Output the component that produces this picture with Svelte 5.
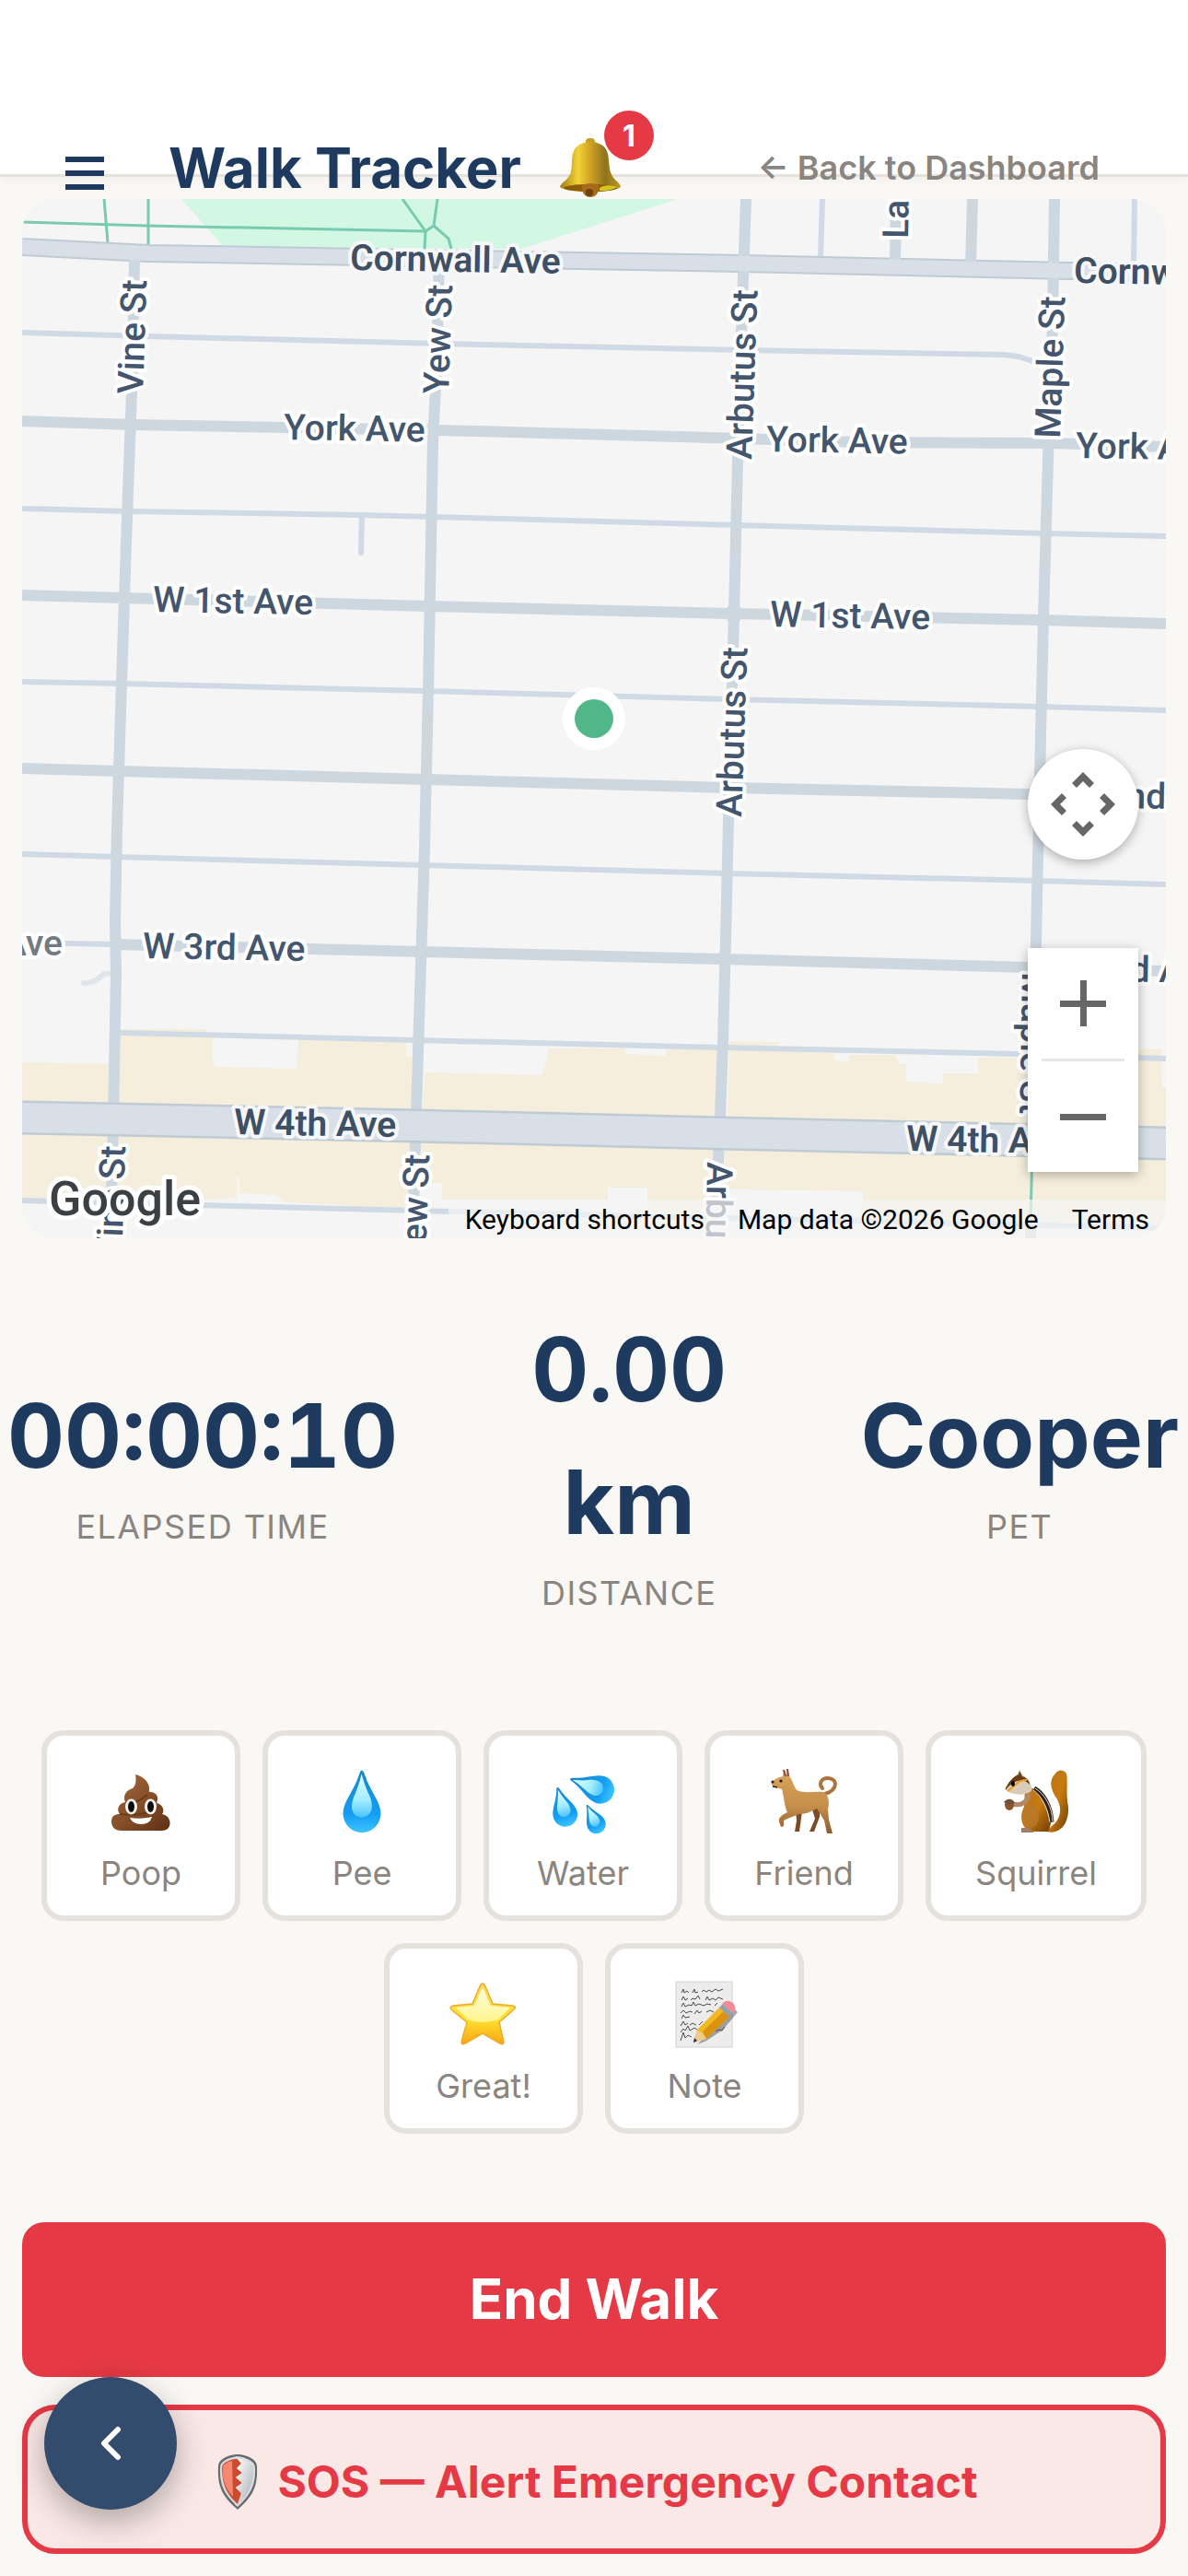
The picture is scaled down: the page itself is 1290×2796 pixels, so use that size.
<script lang="ts">
  type Kind = 'poop' | 'pee' | 'water' | 'friend' | 'squirrel' | 'great' | 'note'

  let elapsed = $state('00:00:10')
  let distance = $state('0.00 km')
  let petName = $state('Cooper')
  let unread = $state(1)

  const events: { kind: Kind; label: string }[] = [
    { kind: 'poop', label: 'Poop' },
    { kind: 'pee', label: 'Pee' },
    { kind: 'water', label: 'Water' },
    { kind: 'friend', label: 'Friend' },
    { kind: 'squirrel', label: 'Squirrel' },
    { kind: 'great', label: 'Great!' },
    { kind: 'note', label: 'Note' }
  ]

  const shops = [
    '24,1153 118,1155 118,1200 24,1198',
    '131,1117 225,1117 225,1123 231,1124 231,1155 236,1158 322,1160 324,1129 441,1131 441,1147 447,1147 447,1210 128,1202',
    '461,1164 507,1165 589,1167 596,1138 679,1138 679,1144 723,1146 723,1139 780,1139 780,1220 459,1210',
    '792,1130 846,1131 846,1137 906,1141 906,1151 922,1152 922,1145 973,1145 976,1155 984,1155 984,1174 1024,1176 1024,1165 1062,1165 1062,1148 1236,1148 1236,1139 1261,1139 1262,1180 1266,1180 1266,1228 790,1216',
    '24,1228 118,1230 118,1306 24,1306',
    '128,1230 447,1238 447,1316 390,1316 390,1309 309,1305 300,1297 260,1295 260,1278 257,1278 257,1300 226,1302 128,1302',
    '457,1238 776,1246 776,1318 703,1316 703,1289 660,1289 660,1302 480,1302 480,1284 457,1283',
    '787,1246 1266,1256 1266,1336 937,1330 937,1293 868,1292 787,1291'
  ]

  const paths = [
    '24,241 160,245 463,251',
    '113,216 117,263',
    '161,216 161,266',
    '437,216 462,251 461,270',
    '475,216 471,245 462,251',
    '471,245 487,259 490,270',
    '1121,1250 1119,1322'
  ]

  const lanes = [
    '24,361 161,365 477,373 806,380 1090,385 1106,387 1127,394',
    '24,552 139,555 392,559 469,561 800,570 1135,579 1266,582',
    '393,561 392,600',
    '24,740 133,742 463,750 793,759 1131,767 1266,771',
    '24,927 126,930 459,939 789,948 1127,956 1266,960',
    '24,1023 122,1025',
    '131,1121 452,1129 785,1137 1104,1144 1266,1149',
    '24,1303 452,1314 783,1322 1266,1333',
    '893,216 891,280',
    '1232,216 1231,288'
  ]

  const streets = [
    '24,457 144,461 477,467 806,476 930,480 1143,481 1266,485',
    '24,646 135,649 467,658 797,666 1133,673 1266,677',
    '24,834 130,837 462,846 791,855 1117,862 1266,866',
    '124,1025 459,1033 787,1041 1117,1050 1266,1054',
    '146,276 144,400 141,480 137,590 132,740 127,900 125,1000 126,1060 125,1110 123,1215 120,1344',
    '477,276 474,400 470,480 465,750 461,920 455,1110 451,1240 448,1344',
    '810,216 806,330 801,500 797,666 791,890 788,1020 785,1130 781,1240 776,1344',
    '1145,216 1143,350 1138,500 1133,670 1130,800 1125,1020 1121,1240',
    '1119,1324 1119,1344',
    '973,216 972,288',
    '1056,216 1054,288'
  ]

  const labels = [
    { text: 'Cornwall Ave', x: 380, y: 293, angle: 1, main: true },
    { text: 'Cornwall Ave', x: 1166, y: 307, angle: 1, main: true },
    { text: 'York Ave', x: 308, y: 477, angle: 1 },
    { text: 'York Ave', x: 832, y: 490, angle: 1 },
    { text: 'York Ave', x: 1168, y: 497, angle: 1 },
    { text: 'W 1st Ave', x: 166, y: 664, angle: 1 },
    { text: 'W 1st Ave', x: 836, y: 680, angle: 1 },
    { text: 'W 2nd Ave', x: 1156, y: 876, angle: 1 },
    { text: 'W 3rd Ave', x: 155, y: 1040, angle: 1 },
    { text: 'W 3rd Ave', x: 1147, y: 1064, angle: 1 },
    { text: 'W 4th Ave', x: 254, y: 1231, angle: 1, main: true },
    { text: 'W 4th Ave', x: 984, y: 1249, angle: 1, main: true },
    { text: 'Ave', x: 3, y: 1037, angle: 0, faint: true },
    { text: 'Vine St', x: 155, y: 428, angle: -88 },
    { text: 'Yew St', x: 487, y: 428, angle: -88 },
    { text: 'Arbutus St', x: 816, y: 499, angle: -88 },
    { text: 'Maple St', x: 1151, y: 476, angle: -88 },
    { text: 'Larch St', x: 986, y: 259, angle: -89 },
    { text: 'Arbutus St', x: 805, y: 887, angle: -88 },
    { text: 'Vine St', x: 132, y: 1368, angle: -88 },
    { text: 'Yew St', x: 462, y: 1372, angle: -88 },
    { text: 'Arbutus St', x: 768, y: 1261, angle: 91 },
    { text: 'Maple St', x: 1110, y: 1055, angle: 91 }
  ]
</script>

<svg class="defs" aria-hidden="true">
  <defs>
    <linearGradient id="dropShine" x1="0" y1="0" x2="0" y2="1">
      <stop offset="0" stop-color="#e2ffff" />
      <stop offset="0.6" stop-color="#a4edff" />
      <stop offset="1" stop-color="#4cc3fb" />
    </linearGradient>
    <linearGradient id="dropBody" x1="0" y1="0" x2="0" y2="1">
      <stop offset="0" stop-color="#1787c9" />
      <stop offset="0.7" stop-color="#139df3" />
      <stop offset="1" stop-color="#3cc4ff" />
    </linearGradient>
    <linearGradient id="gold" x1="0" y1="0" x2="1" y2="0">
      <stop offset="0" stop-color="#a57a12" />
      <stop offset="0.3" stop-color="#f2d338" />
      <stop offset="0.5" stop-color="#cfa324" />
      <stop offset="0.75" stop-color="#8f7420" />
      <stop offset="1" stop-color="#c29a1c" />
    </linearGradient>
    <linearGradient id="starFill" x1="0" y1="0" x2="0" y2="1">
      <stop offset="0" stop-color="#ffd95c" />
      <stop offset="0.6" stop-color="#ffe02f" />
      <stop offset="1" stop-color="#f9a413" />
    </linearGradient>
    <linearGradient id="starShine" x1="0" y1="0" x2="0" y2="1">
      <stop offset="0" stop-color="#fffde0" />
      <stop offset="1" stop-color="#fff58c" />
    </linearGradient>
    <linearGradient id="brown" x1="0" y1="0" x2="1" y2="1">
      <stop offset="0" stop-color="#a8683a" />
      <stop offset="0.5" stop-color="#86502a" />
      <stop offset="1" stop-color="#5e2f16" />
    </linearGradient>
    <linearGradient id="tan" x1="0" y1="0" x2="0" y2="1">
      <stop offset="0" stop-color="#dda75c" />
      <stop offset="0.6" stop-color="#c48d4a" />
      <stop offset="1" stop-color="#8f5a2c" />
    </linearGradient>
    <linearGradient id="fur" x1="0" y1="0" x2="1" y2="1">
      <stop offset="0" stop-color="#b9741c" />
      <stop offset="0.5" stop-color="#c97a0e" />
      <stop offset="1" stop-color="#6d3c08" />
    </linearGradient>
    <linearGradient id="steel" x1="0" y1="0" x2="1" y2="1">
      <stop offset="0" stop-color="#ffffff" />
      <stop offset="1" stop-color="#a9adb2" />
    </linearGradient>
  </defs>
</svg>

{#snippet drop()}
  <path d="M20 0C22 0 23 3 24 6C29 22 41 34 41 47A20.500 20.500 0 0 1 0 47C0 34 12 22 17 6C18 3 19 0 20 0Z" fill="url(#dropBody)" />
  <path d="M20 4C22 10 24 18 28 26C33 36 34 50 20 51C7 50 8 36 13 26C16 18 19 10 20 4Z" fill="url(#dropShine)" />
{/snippet}

{#snippet emoji(kind: Kind)}
  <svg class="emoji" viewBox="0 0 72 72" aria-hidden="true">
    {#if kind === 'poop'}
      <path
        d="M30 6C39 8 46 15 45 23C45 25 45 25 46 25C53 25 56 31 53 37C60 38 62 46 59 49C66 50 69 57 67 62C65 67 60 67 56 67H15C9 67 4 64 4 57C4 51 8 49 13 49C9 44 12 37 19 36C16 29 20 23 27 21C31 18 31 11 30 6Z"
        fill="url(#brown)"
      />
      <path d="M20 36C30 38 37 33 43 28" fill="none" stroke="#6b3b1c" stroke-width="2" />
      <path d="M13 49C29 51 46 49 55 41" fill="none" stroke="#6b3b1c" stroke-width="2" />
      <ellipse cx="25.500" cy="41" rx="6.500" ry="8.500" fill="#f5f3f0" />
      <ellipse cx="46.500" cy="41" rx="6.500" ry="8.500" fill="#f5f3f0" />
      <ellipse cx="25.500" cy="41" rx="3.500" ry="6" fill="#0b0b0b" />
      <ellipse cx="46.500" cy="41" rx="3.500" ry="6" fill="#0b0b0b" />
      <path d="M24 53Q36 55 48 52Q46 60 36 60Q27 60 24 53Z" fill="#fff" />
    {:else if kind === 'pee'}
      <g transform="translate(15.500 1.500)">{@render drop()}</g>
    {:else if kind === 'water'}
      <g transform="translate(8 20) rotate(-16) scale(0.65) translate(-20 0)">{@render drop()}</g>
      <g transform="translate(22 11) rotate(-70) scale(0.74) translate(-20 0)">{@render drop()}</g>
      <g transform="translate(40 39) rotate(-26) scale(0.5) translate(-20 0)">{@render drop()}</g>
    {:else if kind === 'friend'}
      <path d="M59 27C73 23 73 10 62 10C54 10 52 17 56 21" fill="none" stroke="#aa7640" stroke-width="4" stroke-linecap="round" />
      <path d="M27 44L28 56L26 68H31L34 46Z" fill="#7c4a26" />
      <path d="M45 44L48 54L42 68H47L53 52V42Z" fill="#7c4a26" />
      <path
        d="M1 14C6 10 9 9 13 8L14 0L17 7L18 -1L20 8C24 12 24 18 28 23C36 27 47 24 57 25C63 28 64 36 62 44L63 55L67 70H61L58 56L50 43C44 46 38 49 31 49C26 51 19 53 14 56L14 62L11 63L9 57C8 52 14 49 18 47C15 42 14 29 12 22L5 20C2 19 0 17 1 14Z"
        fill="url(#tan)"
      />
      <path d="M14 1L16 8M18 0L19 8" stroke="#8a4848" stroke-width="2" />
      <circle cx="11" cy="13" r="1.600" fill="#111" />
      <circle cx="2" cy="14" r="1.600" fill="#222" />
      <path d="M2 19L7 20" stroke="#2a1a10" stroke-width="1.500" />
    {:else if kind === 'squirrel'}
      <path d="M47 68C64 72 72 57 71 41C68 26 71 14 69 5C65 0 60 1 57 5C49 13 52 23 59 33C65 44 62 56 53 62Z" fill="url(#fur)" />
      <path d="M24 21C33 20 40 23 45 31C53 42 55 57 49 68H20C19 64 22 65 24 64C18 56 20 47 23 41Z" fill="url(#fur)" />
      <path d="M34 21C44 27 52 40 53 58" fill="none" stroke="#2b2219" stroke-width="5" />
      <path d="M35 21C45 27 54 41 54 58M33 23C42 29 49 43 51 58" fill="none" stroke="#e9ddcc" stroke-width="1" />
      <path d="M2 22C5 15 10 10 15 7L18 1L22 7C29 11 32 19 31 24C25 29 15 28 8 26Z" fill="#d8cbb9" />
      <path d="M3 21C7 13 12 8 17 6L18 2L21 8C27 10 29 14 29 17C22 9 11 12 3 23Z" fill="#6a3d14" />
      <path d="M5 24C13 20 16 11 26 12" fill="none" stroke="#f09b27" stroke-width="2" />
      <ellipse cx="11" cy="16" rx="2" ry="3" fill="#090909" />
      <path d="M28 29C25 38 18 40 10 38" fill="none" stroke="#ae8a69" stroke-width="5" stroke-linecap="round" />
      <ellipse cx="30" cy="51" rx="9" ry="13" fill="#b7792c" opacity="0.800" />
      <ellipse cx="7" cy="39" rx="5" ry="6" fill="#8a5531" />
      <path d="M1 36C4 32 10 31 13 37L7 39Z" fill="#70503b" />
      <path d="M20 64H29L34 69H20Z" fill="#9d8066" />
    {:else if kind === 'great'}
      <path
        d="M35 2Q37 2 38 5L46 24L68 26Q73 27 68 31L53 44L58 65Q58 69 54 67L35 56L16 67Q12 69 12 65L18 44L2 31Q-2 27 3 26L24 24L32 5Q33 2 35 2Z"
        fill="url(#starFill)"
        stroke="#eeaa2c"
        stroke-width="1.500"
      />
      <path d="M35 6L44 26L65 28L52 41Q35 47 19 41L6 28L26 26Z" fill="url(#starShine)" />
    {:else}
      <rect x="5" y="0" width="61" height="71" fill="#ececec" stroke="#d2d2d2" stroke-width="1" />
      <g fill="none" stroke="#4a4a4a" stroke-width="1">
        <path d="M11 12l2 -4l1 4l3 -2l2 2M23 12l2 -4l1 4l3 -1M33 11l2 -2l3 2l3 -2l3 2l4 -3l3 2l5 -2" />
        <path d="M11 20l2 -4l2 4l3 -2M21 20l2 -2l3 1l3 -4l2 4M37 20l2 -4l2 4l4 -2l3 2l3 -3l5 2" />
        <path d="M11 27l2 -4l2 4l4 -2l3 1l2 -4l2 4l4 -2l5 2l4 -2l4 1M47 26l3 -3" />
        <path d="M10 34l3 -3l3 3l4 -2l3 1M25 35l3 -4l2 3l3 -2M38 33l4 -2l4 2" />
        <path d="M11 40l2 -4l2 3l5 -1" />
        <path d="M10 48l3 -5l2 4l3 -2M20 47l3 -2l4 2M30 47l4 -4" />
        <path d="M10 55l3 -4l2 2l3 -5l2 5l5 -3l3 2M48 54l3 -2l4 1l3 -4" />
        <path d="M10 64l3 -9l2 6l3 -3l4 2" />
      </g>
      <path d="M28 68L61 39L69 30L72 33L56 52L38 64Z" fill="#4c4c55" opacity="0.500" />
      <path d="M24 66L28 52L53 27L64 37L38 62Z" fill="#f4b822" />
      <path d="M34 54L58 31L64 37L38 62Z" fill="#d9930f" />
      <path d="M24 66L28 53L33 55L38 62Z" fill="#edc993" />
      <path d="M24 66L25 61L28 64Z" fill="#222838" />
      <path d="M52 28L56 24L67 34L63 38Z" fill="#93a2ae" />
      <path d="M55 24Q60 18 67 23Q72 29 67 34Z" fill="#ef8d93" />
    {/if}
  </svg>
{/snippet}

<div class="page">
  <header class="topbar">
    <button class="menu" aria-label="Menu"><span></span><span></span><span></span></button>
    <h1>Walk Tracker</h1>
    <button class="bell" aria-label="Notifications">
      <svg viewBox="0 0 66 66" aria-hidden="true">
        <rect x="28" y="1" width="10" height="9" rx="4" fill="#c79c22" />
        <path d="M0 54C1 49 9 47 12 38C14 26 11 14 21 8Q33 1 45 8C55 14 52 26 55 38C58 47 65 48 66 54C57 61 9 61 0 54Z" fill="url(#gold)" />
        <ellipse cx="33" cy="55" rx="29" ry="4" fill="#8c5c0b" />
        <path d="M43 55C48 51 57 52 62 54C56 58 49 58 43 58Z" fill="#d8c41a" />
        <path d="M24 52Q33 48 42 52V57Q40 65 33 65Q26 65 24 57Z" fill="#a66a1b" />
        <ellipse cx="32" cy="60" rx="4" ry="4" fill="#70410f" />
      </svg>
      <span class="badge">{unread}</span>
    </button>
    <a class="back" href="#dashboard">← Back to Dashboard</a>
  </header>

  <main>
    <section class="map" aria-label="Map">
      <svg class="tiles" viewBox="24 216 1242 1128" preserveAspectRatio="xMidYMid slice">
        <rect x="24" y="216" width="1242" height="1128" fill="#f5f5f5" />
        <polygon points="197,216 736,216 567,270 243,268" fill="#d2f7e2" />
        {#each shops as points}
          <polygon {points} fill="#f6eedc" />
        {/each}
        {#each paths as points}
          <polyline class="path" {points} />
        {/each}
        <path d="M91 1067Q102 1067 108 1061T121 1057" fill="none" stroke="#e0e5e9" stroke-width="6" stroke-linecap="round" />
        {#each lanes as points}
          <polyline class="lane" {points} />
        {/each}
        <polyline class="avenue edge" points="24,268 161,275 806,286 1160,294 1266,296" stroke-width="20" />
        {#each streets as points}
          <polyline class="street" {points} />
        {/each}
        <circle cx="797" cy="666" r="10" fill="#cdd7e0" />
        <polyline class="avenue" points="24,268 161,275 806,286 1160,294 1266,296" stroke-width="16" />
        <polyline class="avenue edge" points="24,1213 126,1215 452,1222 783,1230 1266,1241" stroke-width="37" />
        <polyline class="avenue" points="24,1213 126,1215 452,1222 783,1230 1266,1241" stroke-width="32" />
        {#each labels as label}
          <text
            class:main={label.main}
            class:faint={label.faint}
            transform="translate({label.x} {label.y}) rotate({label.angle})">{label.text}</text
          >
        {/each}
        <circle cx="645" cy="780" r="34" fill="#fff" />
        <circle cx="645" cy="780" r="21" fill="#52b788" />
        <text class="brand" x="53" y="1319">Google</text>
      </svg>

      <div class="controls">
        <button class="pan" aria-label="Map camera controls">
          <svg viewBox="-36 -36 72 72" aria-hidden="true">
            {#each [0, 90, 180, 270] as angle}
              <path d="M0 -35L12 -23L7 -18L0 -25L-7 -18L-12 -23Z" transform="rotate({angle})" />
            {/each}
          </svg>
        </button>
        <div class="zoom">
          <button aria-label="Zoom in">
            <svg viewBox="0 0 50 50" aria-hidden="true"><path d="M22 0h7v22h21v7H29v21h-7V29H0v-7h22z" /></svg>
          </button>
          <hr />
          <button aria-label="Zoom out">
            <svg viewBox="0 0 50 50" aria-hidden="true"><path d="M0 22h50v7H0z" /></svg>
          </button>
        </div>
      </div>

      <div class="attribution">
        <button>Keyboard shortcuts</button>
        <span>Map data ©2026 Google</span>
        <a href="#terms">Terms</a>
      </div>
    </section>

    <section class="stats">
      <div class="stat">
        <div class="value">{elapsed}</div>
        <div class="caption">Elapsed Time</div>
      </div>
      <div class="stat">
        <div class="value">{distance}</div>
        <div class="caption">Distance</div>
      </div>
      <div class="stat">
        <div class="value">{petName}</div>
        <div class="caption">Pet</div>
      </div>
    </section>

    <section class="events">
      {#each events as event}
        <button class="event">
          {@render emoji(event.kind)}
          <span>{event.label}</span>
        </button>
      {/each}
    </section>

    <div class="actions">
      <button class="end">End Walk</button>
      <button class="sos">
        <svg viewBox="0 0 44 60" aria-hidden="true">
          <path d="M22 0C31 0 43 5 43 13C44 35 39 45 22 60C5 45 0 35 1 13C1 5 13 0 22 0Z" fill="#666a6d" />
          <path d="M22 2C30 3 41 7 41 14C42 34 36 44 22 57C8 44 2 34 3 14C3 7 14 3 22 2Z" fill="#d9dcdf" />
          <path d="M22 5L26 10L21 15L27 20L20 25L27 31L20 36L26 42L22 54C10 43 5 33 5 14C6 8 16 5 22 5Z" fill="#cc4a30" />
          <path d="M16 7L17 46C9 37 5 28 6 14C7 10 12 8 16 7Z" fill="#f5886f" />
          <path d="M22 5C31 5 38 9 39 14C39 32 35 43 23 53L26 42L20 36L27 31L20 25L27 20L21 15L26 10Z" fill="url(#steel)" />
        </svg>
        SOS — Alert Emergency Contact
      </button>
    </div>
  </main>

  <button class="fab" aria-label="Go back">
    <svg viewBox="0 0 24 40" aria-hidden="true"><path d="M20 5L5 20L20 35" /></svg>
  </button>
</div>

<style>
  :global(body) {
    background: #faf8f5;
  }

  .page {
    font-family: Inter, 'Liberation Sans', sans-serif;
    color: #1e3a5f;
    line-height: 1.5;
  }

  button {
    padding: 0;
    border: 0;
    background: none;
    color: inherit;
    font: inherit;
    cursor: pointer;
  }

  a {
    color: inherit;
    text-decoration: none;
  }

  .defs {
    position: absolute;
    width: 0;
    height: 0;
  }

  /* The bar clears the phone's status area, its row hangs over the lower edge */
  .topbar {
    position: relative;
    z-index: 2;
    display: flex;
    align-items: flex-start;
    box-sizing: border-box;
    height: 192px;
    padding: 149px 96px 0 71px;
    border-bottom: 3px solid #e5e1dc;
    background: #fff;
    box-shadow: 0 3px 12px rgba(0, 0, 0, 0.04);
  }

  .menu {
    display: flex;
    flex-direction: column;
    gap: 9px;
    width: 42px;
    margin: 21px 70px 0 0;
  }

  .menu span {
    height: 6px;
    background: #1e3a5f;
  }

  h1 {
    margin: 0;
    font-size: 60px;
    font-weight: 700;
    line-height: 66px;
    white-space: nowrap;
  }

  .bell {
    position: relative;
    width: 66px;
    height: 66px;
    margin-left: 42px;
  }

  .bell svg {
    display: block;
    width: 66px;
    height: 66px;
  }

  .badge {
    position: absolute;
    top: -29px;
    right: -36px;
    width: 54px;
    border-radius: 27px;
    background: #e63946;
    color: #fff;
    font-size: 33px;
    font-weight: 700;
    line-height: 54px;
    text-align: center;
  }

  .back {
    margin-left: auto;
    color: #8a8580;
    font-size: 36px;
    font-weight: 600;
    line-height: 66px;
    white-space: nowrap;
  }

  main {
    padding: 24px 0;
  }

  .map {
    position: relative;
    aspect-ratio: 207 / 188;
    margin: 0 24px;
    border-radius: 36px;
    overflow: hidden;
    background: #f5f5f5;
  }

  .tiles {
    display: block;
    width: 100%;
    height: 100%;
  }

  .tiles polyline {
    fill: none;
    stroke-linejoin: round;
  }

  .path {
    stroke: #78cbb0;
    stroke-width: 3;
  }

  .lane {
    stroke: #cfdae5;
    stroke-width: 6;
    stroke-linecap: round;
  }

  .street {
    stroke: #cdd7e0;
    stroke-width: 12;
  }

  .avenue {
    stroke: #d8dfe8;
  }

  .avenue.edge {
    stroke: #bfcbd3;
  }

  .tiles text {
    fill: #43566e;
    stroke: #fff;
    stroke-width: 8px;
    stroke-linejoin: round;
    paint-order: stroke;
    font-family: Roboto, sans-serif;
    font-size: 39px;
    font-weight: 500;
  }

  .tiles text.main {
    fill: #3f5064;
    stroke: #f6f7f9;
    font-weight: 600;
  }

  .tiles text.faint {
    fill: #737a82;
  }

  .tiles text.brand {
    fill: #3c4043;
    stroke-width: 10px;
    font-size: 52px;
  }

  .controls {
    position: absolute;
    right: 30px;
    bottom: 72px;
    display: flex;
    flex-direction: column;
    gap: 96px;
    width: 120px;
  }

  .controls button {
    display: flex;
    align-items: center;
    justify-content: center;
    width: 120px;
    height: 120px;
  }

  .controls svg {
    width: 50px;
    fill: #666;
  }

  .controls .pan {
    border-radius: 60px;
    background: #fff;
    box-shadow: 0 3px 12px rgba(0, 0, 0, 0.3);
  }

  .controls .pan svg {
    width: 72px;
  }

  .zoom {
    background: #fff;
    box-shadow: 0 3px 12px rgba(0, 0, 0, 0.3);
  }

  .zoom hr {
    height: 3px;
    margin: 0 15px;
    border: 0;
    background: #e6e6e6;
  }

  .attribution {
    position: absolute;
    right: 0;
    bottom: 0;
    display: flex;
    color: #000;
    font-family: Roboto, sans-serif;
    font-size: 30px;
    line-height: 40px;
    white-space: nowrap;
  }

  .attribution > * {
    padding: 2px 18px 0;
    background: rgba(245, 245, 245, 0.7);
  }

  .stats {
    display: grid;
    grid-template-columns: auto 1fr auto;
    align-items: center;
    gap: 72px;
    padding: 70px 10px 122px 8px;
    text-align: center;
  }

  .value {
    font-size: 96px;
    font-weight: 700;
    font-variant-numeric: tabular-nums;
  }

  .caption {
    color: #8a8580;
    font-size: 36px;
    letter-spacing: 0.04em;
    text-transform: uppercase;
  }

  .events {
    display: flex;
    flex-wrap: wrap;
    justify-content: center;
    gap: 24px;
    padding: 0 24px 96px;
  }

  .event {
    display: flex;
    flex-direction: column;
    align-items: center;
    gap: 14px;
    box-sizing: border-box;
    min-width: 216px;
    padding: 36px 48px 19px;
    border: 6px solid #e5e1dc;
    border-radius: 24px;
    background: #fff;
    color: #8a8580;
    font-size: 36px;
  }

  .emoji {
    display: block;
    width: 72px;
    height: 72px;
    overflow: visible;
  }

  .actions {
    display: flex;
    flex-direction: column;
    gap: 30px;
    padding: 0 24px;
  }

  .end {
    padding: 38px 39px 40px;
    border-radius: 24px;
    background: #e63946;
    color: #fff;
    font-size: 60px;
    font-weight: 700;
  }

  .sos {
    display: flex;
    align-items: center;
    justify-content: center;
    gap: 21px;
    padding: 42px 39px 36px 47px;
    border: 6px solid #e63946;
    border-radius: 36px;
    background: #f9e8e6;
    color: #e63946;
    font-size: 48px;
    font-weight: 700;
  }

  .sos svg {
    width: 44px;
    height: 60px;
  }

  .fab {
    position: fixed;
    z-index: 3;
    bottom: 72px;
    left: 48px;
    display: flex;
    align-items: center;
    justify-content: center;
    width: 144px;
    height: 144px;
    border-radius: 72px;
    background: #334b6c;
    box-shadow: 0 12px 36px rgba(0, 0, 0, 0.3);
  }

  .fab svg {
    width: 24px;
    height: 40px;
    fill: none;
    stroke: #fff;
    stroke-width: 6;
    stroke-linecap: round;
    stroke-linejoin: round;
  }
</style>
